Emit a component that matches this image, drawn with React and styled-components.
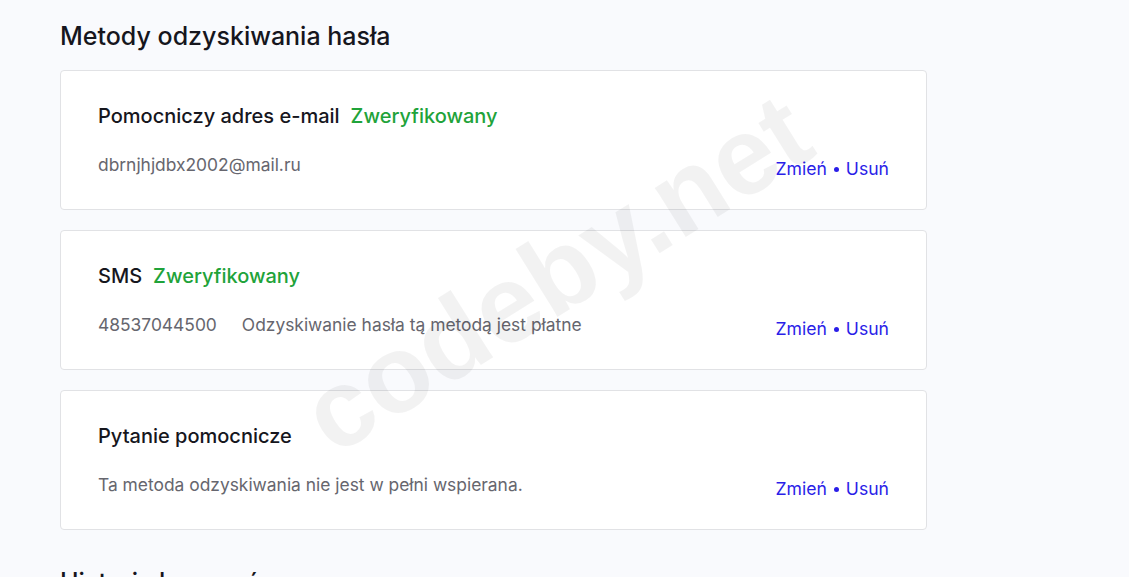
import React from "react";
import styled, { createGlobalStyle } from "styled-components";

const GlobalStyle = createGlobalStyle`
  html, body {
    margin: 0;
    padding: 0;
    background: #f9fafd;
    font-family: Inter, "Noto Sans", Arial, sans-serif;
    color: #1b1b22;
  }
  * { box-sizing: border-box; }
`;

const Page = styled.div`
  position: relative;
  min-height: 577px;
  overflow: hidden;
  padding: 22px 0 0 60px;
`;

const Section = styled.section`
  width: 867px;
  & + & {
    margin-top: 38px;
  }
`;

const SectionTitle = styled.h2`
  margin: 0 0 19px;
  font-size: 25px;
  line-height: 29px;
  font-weight: 500;
  color: #16161d;
  letter-spacing: 0;
`;

const CardList = styled.div`
  display: flex;
  flex-direction: column;
  gap: 20px;
`;

const Card = styled.div`
  height: 140px;
  background: #ffffff;
  border: 1px solid #e1e2e5;
  border-radius: 4px;
  padding: 33px 37px 0 37px;
  display: flex;
  flex-direction: column;
`;

const CardTitle = styled.div`
  display: flex;
  align-items: baseline;
  gap: 11px;
  font-size: 20px;
  line-height: 24px;
  font-weight: 500;
  color: #16161d;
`;

const Verified = styled.span`
  color: #1fa33a;
  font-weight: 500;
`;

const Row = styled.div`
  margin-top: 26px;
  display: flex;
  justify-content: space-between;
  align-items: flex-start;
`;

const Details = styled.div`
  display: flex;
  gap: 25px;
  font-size: 17.4px;
  line-height: 21px;
  color: #66666e;
`;

const Actions = styled.div`
  margin-top: 4px;
  display: flex;
  align-items: center;
  gap: 7px;
  font-size: 17.6px;
  line-height: 22px;
  color: #2a1ee8;
`;

const ActionLink = styled.a`
  color: inherit;
  text-decoration: none;
  cursor: pointer;
`;

const Dot = styled.span`
  width: 5px;
  height: 5px;
  border-radius: 50%;
  background: #2a1ee8;
  margin-top: 1px;
`;

const Watermark = styled.div`
  position: absolute;
  left: 270px;
  top: 218px;
  font-family: "Liberation Sans", Arial, sans-serif;
  font-weight: 700;
  font-size: 110px;
  line-height: 1;
  color: rgba(0, 0, 0, 0.05);
  transform: rotate(-32deg);
  transform-origin: center;
  pointer-events: none;
  white-space: nowrap;
`;

const methods = [
  {
    title: "Pomocniczy adres e-mail",
    verified: true,
    details: ["dbrnjhjdbx2002@mail.ru"],
  },
  {
    title: "SMS",
    verified: true,
    details: ["48537044500", "Odzyskiwanie hasła tą metodą jest płatne"],
  },
  {
    title: "Pytanie pomocnicze",
    verified: false,
    details: ["Ta metoda odzyskiwania nie jest w pełni wspierana."],
  },
];

export default function App() {
  return (
    <>
      <GlobalStyle />
      <Page>
        <Section>
          <SectionTitle>Metody odzyskiwania hasła</SectionTitle>
          <CardList>
            {methods.map((m) => (
              <Card key={m.title}>
                <CardTitle>
                  <span>{m.title}</span>
                  {m.verified && <Verified>Zweryfikowany</Verified>}
                </CardTitle>
                <Row>
                  <Details>
                    {m.details.map((d) => (
                      <span key={d}>{d}</span>
                    ))}
                  </Details>
                  <Actions>
                    <ActionLink>Zmień</ActionLink>
                    <Dot />
                    <ActionLink>Usuń</ActionLink>
                  </Actions>
                </Row>
              </Card>
            ))}
          </CardList>
        </Section>
        <Section>
          <SectionTitle>Historia logowań</SectionTitle>
        </Section>
        <Watermark>codeby.net</Watermark>
      </Page>
    </>
  );
}
